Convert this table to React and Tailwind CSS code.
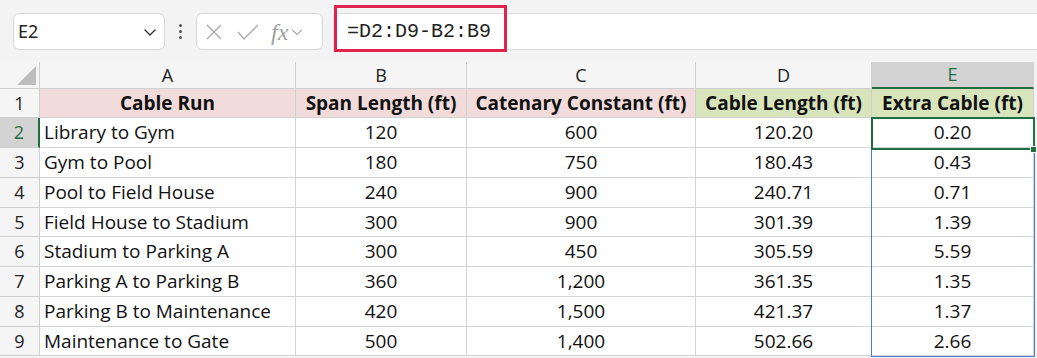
import React from "react";

const rows = [
  ["Library to Gym", "120", "600", "120.20", "0.20"],
  ["Gym to Pool", "180", "750", "180.43", "0.43"],
  ["Pool to Field House", "240", "900", "240.71", "0.71"],
  ["Field House to Stadium", "300", "900", "301.39", "1.39"],
  ["Stadium to Parking A", "300", "450", "305.59", "5.59"],
  ["Parking A to Parking B", "360", "1,200", "361.35", "1.35"],
  ["Parking B to Maintenance", "420", "1,500", "421.37", "1.37"],
  ["Maintenance to Gate", "500", "1,400", "502.66", "2.66"],
];

const rowH = ["h-[30px]", "h-[30px]", "h-[30px]", "h-[29px]", "h-[30px]", "h-[30px]", "h-[30px]", "h-[29px]"];

function Chevron({ className }) {
  return (
    <svg viewBox="0 0 16 16" className={className} fill="none" stroke="currentColor" strokeWidth="1.4" strokeLinecap="round" strokeLinejoin="round">
      <path d="M3 6l5 5 5-5" />
    </svg>
  );
}

export default function App() {
  const font = { fontFamily: "'Open Sans', 'Liberation Sans', sans-serif" };
  return (
    <div className="w-[1037px] h-[358px] overflow-hidden bg-[#f3f3f3] text-[#111]" style={font}>
      {/* Toolbar */}
      <div className="relative h-[62px] flex items-start pt-[13px] pl-[13px]">
        <div className="w-[152px] h-[37px] bg-white border border-[#d6d6d6] rounded-[6px] flex items-center justify-between pl-[4px] pr-[6px]">
          <span className="text-[18px] text-[#222]" style={{ fontFamily: "'Noto Sans', sans-serif" }}>E2</span>
          <Chevron className="w-[16px] h-[16px] text-[#333]" />
        </div>
        <div className="w-[31px] h-[37px] flex items-center justify-center">
          <div className="flex flex-col gap-[3px]">
            <span className="w-[3px] h-[3px] rounded-full bg-[#555]" />
            <span className="w-[3px] h-[3px] rounded-full bg-[#555]" />
            <span className="w-[3px] h-[3px] rounded-full bg-[#555]" />
          </div>
        </div>
        <div className="w-[127px] h-[37px] bg-white border border-[#d6d6d6] rounded-[6px] flex items-center pl-[8px] gap-[14px] text-[#a8a8a8]">
          <svg viewBox="0 0 18 18" className="w-[18px] h-[18px]" fill="none" stroke="currentColor" strokeWidth="1.3">
            <path d="M2 2l14 14M16 2L2 16" />
          </svg>
          <svg viewBox="0 0 22 18" className="w-[22px] h-[18px]" fill="none" stroke="currentColor" strokeWidth="1.3">
            <path d="M1 9l6 7L21 2" />
          </svg>
          <div className="flex items-center gap-[2px] -ml-[2px]">
            <span className="text-[24px] italic leading-none text-[#a0a0a0]" style={{ fontFamily: "'Liberation Serif', serif" }}>fx</span>
            <Chevron className="w-[14px] h-[14px]" />
          </div>
        </div>
        <div className="ml-[10px] flex-1 h-[37px] bg-white border-y border-l border-[#dcdcdc] flex items-center pl-[13px]">
          <span className="text-[20px] text-[#222]" style={{ fontFamily: "'Liberation Mono', monospace" }}>=D2:D9-B2:B9</span>
        </div>
        <div className="absolute left-[334px] top-[5px] w-[173px] h-[47px] border-[3px] border-[#e0234e]" />
      </div>

      {/* Grid */}
      <div className="relative">
        <div className="grid grid-cols-[40px_256px_171px_229px_176px_162px_3px] text-[19px]">
          {/* column headers */}
          <div className="h-[27px] bg-[#f5f5f5] border-r border-b border-[#cfcfcf] flex items-end justify-end p-[3px]">
            <svg viewBox="0 0 20 20" className="w-[19px] h-[19px]">
              <path d="M20 0V20H0Z" fill="#bdbdbd" />
            </svg>
          </div>
          {["A", "B", "C", "D"].map((l) => (
            <div key={l} className="h-[27px] bg-[#f5f5f5] border-r border-b border-[#cfcfcf] flex items-center justify-center text-[#222] text-[18px]">
              {l}
            </div>
          ))}
          <div className="h-[27px] bg-[#d3d3d3] border-r border-[#cfcfcf] border-b-2 border-b-[#1e6e42] flex items-center justify-center text-[#1e6e42] text-[18px]">
            E
          </div>
          <div className="h-[27px] bg-[#f3f3f3]" />

          {/* row 1 */}
          <div className="h-[29px] bg-[#f5f5f5] border-r border-b border-[#cfcfcf] flex items-center justify-center text-[#222] text-[18px]">1</div>
          {["Cable Run", "Span Length (ft)", "Catenary Constant (ft)"].map((t) => (
            <div key={t} className="h-[29px] bg-[#f2dcdb] border-r border-b border-[#d0d0d0] flex items-center justify-center font-bold text-[19px] whitespace-nowrap">
              {t}
            </div>
          ))}
          {["Cable Length (ft)", "Extra Cable (ft)"].map((t) => (
            <div key={t} className="h-[29px] bg-[#d8e4bc] border-r border-b border-[#d0d0d0] flex items-center justify-center font-bold text-[19px] whitespace-nowrap">
              {t}
            </div>
          ))}
          <div className="h-[29px] bg-[#f3f3f3]" />

          {rows.map((r, i) => (
            <React.Fragment key={i}>
              <div
                className={
                  rowH[i] +
                  " border-b border-[#cfcfcf] flex items-center justify-center text-[18px] " +
                  (i === 0
                    ? "bg-[#d3d3d3] text-[#1e6e42] border-r-2 border-r-[#1e6e42]"
                    : "bg-[#f5f5f5] text-[#222] border-r")
                }
              >
                {i + 2}
              </div>
              <div className={rowH[i] + " bg-white border-r border-b border-[#d4d4d4] flex items-center pl-[4px] whitespace-nowrap"}>{r[0]}</div>
              {r.slice(1).map((v, j) => (
                <div key={j} className={rowH[i] + " bg-white border-r border-b border-[#d4d4d4] flex items-center justify-center"}>
                  {v}
                </div>
              ))}
              <div className={rowH[i] + " bg-[#f3f3f3]"} />
            </React.Fragment>
          ))}
        </div>

        {/* selection overlays */}
        <div className="absolute left-[871px] top-[56px] w-[164px] h-[239px] border-[1.5px] border-[#4a7fd0] pointer-events-none" />
        <div className="absolute left-[871px] top-[55px] w-[164px] h-[33px] border-2 border-[#1e6e42] pointer-events-none" />
        <div className="absolute left-[1030px] top-[84px] w-[7px] h-[7px] bg-[#1e6e42] border border-white pointer-events-none" />
      </div>
    </div>
  );
}
